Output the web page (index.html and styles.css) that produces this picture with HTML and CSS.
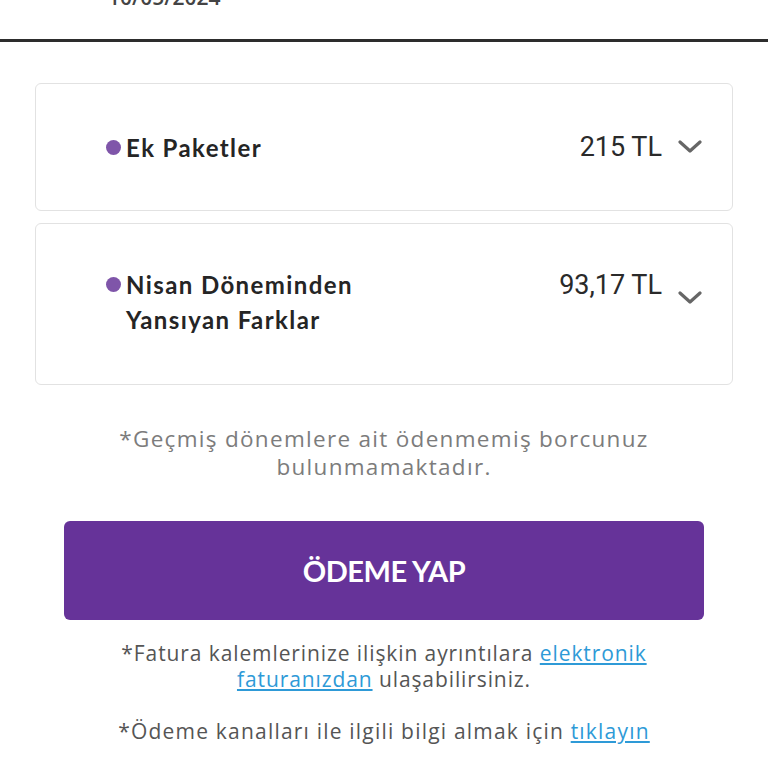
FILE: index.html
```
<!DOCTYPE html>
<html lang="tr">
<head>
<meta charset="utf-8">
<link rel="stylesheet" href="styles.css">
</head>
<body>
<div class="top">
  <div class="date">10/05/2024</div>
</div>
<div class="rule"></div>
<main class="content">
  <section class="card card-single">
    <div class="label"><span class="dot"></span><span class="name">Ek Paketler</span></div>
    <div class="right">
      <span class="amount">215 TL</span>
      <svg class="chev" viewBox="0 0 24 14" width="24" height="14"><path d="M2 2 L12 11 L22 2" fill="none" stroke="#666" stroke-width="3.2" stroke-linecap="round" stroke-linejoin="round"/></svg>
    </div>
  </section>
  <section class="card card-double">
    <div class="label"><span class="dot"></span><span class="name">Nisan Döneminden<br>Yansıyan Farklar</span></div>
    <div class="right right-top">
      <span class="amount">93,17 TL</span>
      <svg class="chev chev-low" viewBox="0 0 24 14" width="24" height="14"><path d="M2 2 L12 11 L22 2" fill="none" stroke="#666" stroke-width="3.2" stroke-linecap="round" stroke-linejoin="round"/></svg>
    </div>
  </section>
  <p class="note">*Geçmiş dönemlere ait ödenmemiş borcunuz<br>bulunmamaktadır.</p>
  <div class="btn-wrap"><button class="pay">ÖDEME YAP</button></div>
  <p class="info">*Fatura kalemlerinize ilişkin ayrıntılara <a href="#">elektronik</a><br><a href="#">faturanızdan</a> ulaşabilirsiniz.</p>
  <p class="info info-2">*Ödeme kanalları ile ilgili bilgi almak için <a href="#">tıklayın</a></p>
</main>
</body>
</html>
```
FILE: styles.css
```
* { box-sizing: border-box; }
html, body { margin: 0; padding: 0; background: #fff; }
body { font-family: "Open Sans", "Noto Sans", sans-serif; color: #222; width: 768px; height: 768px; overflow: hidden; }
.top { height: 39px; position: relative; overflow: hidden; }
.date { position: absolute; top: -17px; left: 108px; font-size: 21px; color: #444; font-weight: 600; }
.rule { height: 3px; background: #2d2d2d; }
.content { padding: 41px 35px 0; }
.card { border: 1.5px solid #e2e2e2; border-radius: 6px; display: flex; justify-content: space-between; padding: 0 30px 0 70px; }
.card-single { height: 128px; align-items: center; }
.card-double { height: 162px; margin-top: 12px; padding-top: 43px; align-items: flex-start; }
.label { display: flex; align-items: flex-start; }
.dot { width: 15px; height: 15px; border-radius: 50%; background: #7f55a9; margin-top: 10px; margin-right: 5px; flex: none; }
.name { font-family: "Lato", sans-serif; font-weight: 700; font-size: 24px; letter-spacing: 1.4px; line-height: 35px; color: #252525; }
.right { display: flex; align-items: center; gap: 16px; }
.right-top { align-items: flex-start; padding-top: 2px; }
.amount { font-family: "Roboto", sans-serif; font-size: 27px; color: #2a2a2a; line-height: 32px; }
.chev { display: block; }
.chev-low { margin-top: 22px; }
.note { text-align: center; color: #7c7c7c; font-size: 22.5px; letter-spacing: 1.3px; line-height: 28px; margin: 40px 0 0; }
.btn-wrap { padding: 0 29px; margin-top: 40px; }
.pay { display: block; width: 100%; height: 99px; border: none; border-radius: 6px; background: #663399; color: #fff; font-family: "Lato", sans-serif; font-weight: 700; font-size: 29px; letter-spacing: -0.5px; }
.info { text-align: center; color: #555; font-size: 21px; letter-spacing: 0.9px; line-height: 26px; margin: 20px 0 0; }
.info-2 { margin-top: 26px; letter-spacing: 1.2px; }
.info a { color: #2e9ad7; text-decoration: underline; text-underline-offset: 2px; }
```
